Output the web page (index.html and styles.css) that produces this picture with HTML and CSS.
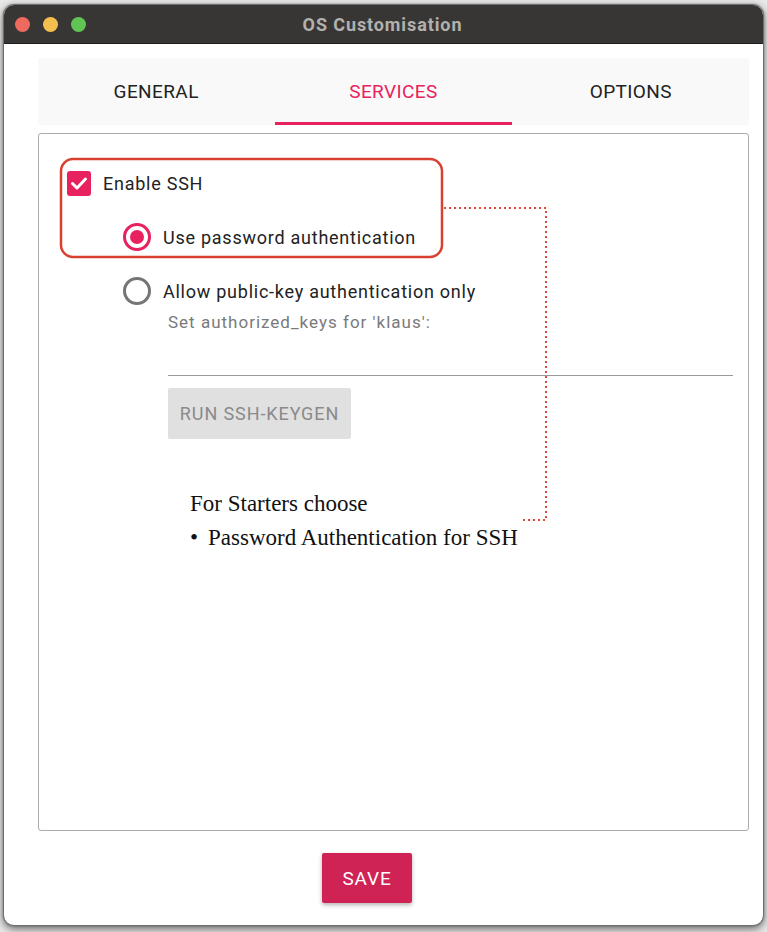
FILE: index.html
```html
<!DOCTYPE html>
<html>
<head>
<meta charset="utf-8">
<link rel="stylesheet" href="styles.css">
</head>
<body>
<div class="window">
  <div class="titlebar">
    <div class="lights">
      <span class="light red"></span>
      <span class="light yellow"></span>
      <span class="light green"></span>
    </div>
    <div class="title">OS Customisation</div>
  </div>
  <div class="content">
    <div class="tabs">
      <div class="tab">GENERAL</div>
      <div class="tab active">SERVICES</div>
      <div class="tab">OPTIONS</div>
    </div>
    <div class="panel">
      <div class="row">
        <span class="checkbox">
          <svg viewBox="0 0 24 24" width="24" height="24"><path d="M5.5 12.5 L10 17 L18.5 8" fill="none" stroke="#fff" stroke-width="3" stroke-linecap="round" stroke-linejoin="round"/></svg>
        </span>
        <span class="label">Enable SSH</span>
      </div>
      <div class="row sub">
        <span class="radio checked"></span>
        <span class="label">Use password authentication</span>
      </div>
      <div class="row sub">
        <span class="radio"></span>
        <span class="label">Allow public-key authentication only</span>
      </div>
      <div class="keys">
        <div class="hint">Set authorized_keys for 'klaus':</div>
        <div class="input"></div>
        <button class="keygen">RUN SSH-KEYGEN</button>
      </div>
      <div class="note">
        <div>For Starters choose</div>
        <div><span class="bullet">•</span>Password Authentication for SSH</div>
      </div>
    </div>
    <div class="actions">
      <button class="save">SAVE</button>
    </div>
  </div>
</div>
<svg class="annot" width="767" height="932" viewBox="0 0 767 932">
  <rect x="61" y="159" width="381" height="98" rx="12" ry="12" fill="none" stroke="#d8412f" stroke-width="2.5"/>
  <path d="M444 208 H546 V520 H522" fill="none" stroke="#e2473b" stroke-width="2" stroke-dasharray="2 3"/>
</svg>
</body>
</html>
```

FILE: styles.css
```css
* { box-sizing: border-box; }
html, body { margin: 0; padding: 0; }
body {
  width: 767px;
  height: 932px;
  background: #e9e9e9;
  padding: 4px 3px 0 3px;
  position: relative;
  overflow: hidden;
  font-family: Roboto, "Liberation Sans", sans-serif;
}
.window {
  width: 761px;
  height: 922px;
  border: 1px solid #6e6e6e;
  border-radius: 11px;
  overflow: hidden;
  background: #fff;
  box-shadow: 0 3px 8px rgba(0,0,0,0.55), 0 0 2px rgba(0,0,0,0.3);
}
.titlebar {
  height: 39px;
  background: #383634;
  position: relative;
  display: flex;
  align-items: center;
  justify-content: center;
  border-bottom: 1px solid #1e1d1c;
}
.lights {
  position: absolute;
  left: 11px;
  top: 12px;
  display: flex;
  gap: 13px;
}
.light {
  width: 15px;
  height: 15px;
  border-radius: 50%;
  display: block;
}
.red { background: #ee6a5f; }
.yellow { background: #f5bf4f; }
.green { background: #61c554; }
.title {
  color: #b3b1af;
  font-weight: 700;
  font-size: 18px;
  letter-spacing: 0.9px;
  margin-left: -2px;
}
.content {
  padding: 14px 14px 0 34px;
}
.tabs {
  display: flex;
  height: 67px;
  background: #f9f9f9;
}
.tab {
  flex: 1;
  display: flex;
  align-items: center;
  justify-content: center;
  font-size: 19px;
  color: #222;
  letter-spacing: 0.4px;
  border-bottom: 3px solid transparent;
  padding-top: 3px;
}
.tab.active {
  color: #e8215f;
  border-bottom-color: #e8215f;
  margin: 0 1px;
}
.panel {
  margin-top: 8px;
  height: 698px;
  border: 1px solid #ababab;
  border-radius: 3px;
  padding: 35px 15px 0 28px;
}
.row {
  height: 28px;
  display: flex;
  align-items: center;
  margin-bottom: 26px;
}
.row.sub {
  padding-left: 56px;
}
.row:nth-child(3) { margin-bottom: 7px; }
.checkbox {
  width: 24px;
  height: 25px;
  background: #e8215f;
  border-radius: 3px;
  display: flex;
  align-items: center;
  justify-content: center;
  margin-right: 12px;
}
.label {
  font-size: 18px;
  color: #222;
  letter-spacing: 0.75px;
}
.radio {
  width: 28px;
  height: 28px;
  border-radius: 50%;
  border: 3px solid #757575;
  margin-right: 12px;
  position: relative;
  flex: none;
}
.radio.checked {
  border-color: #e8215f;
}
.radio.checked::after {
  content: "";
  position: absolute;
  left: 4px;
  top: 4px;
  width: 14px;
  height: 14px;
  border-radius: 50%;
  background: #e8215f;
}
.keys {
  padding-left: 101px;
}
.hint {
  font-size: 17px;
  line-height: 20px;
  color: #7a7a7a;
  letter-spacing: 1px;
}
.input {
  height: 44px;
  border-bottom: 1px solid #9a9a9a;
}
.keygen {
  margin-top: 12px;
  width: 183px;
  height: 51px;
  border: none;
  border-radius: 2px;
  background: #e0e0e0;
  color: #8a8a8a;
  font-family: Roboto, "Liberation Sans", sans-serif;
  font-size: 18px;
  letter-spacing: 0.9px;
  padding: 0;
}
.note {
  margin-top: 48px;
  padding-left: 123px;
  font-family: "Liberation Serif", "Times New Roman", serif;
  font-size: 23px;
  line-height: 34px;
  color: #111;
}
.bullet {
  display: inline-block;
  width: 18px;
}
.actions {
  padding-top: 22px;
  padding-left: 284px;
}
.save {
  width: 90px;
  height: 50px;
  border: none;
  border-radius: 2px;
  background: #cf2255;
  color: #fff;
  font-family: Roboto, "Liberation Sans", sans-serif;
  font-size: 19px;
  letter-spacing: 0.8px;
  padding: 0;
  box-shadow: 0 2px 4px rgba(0,0,0,0.3);
}
.annot {
  position: absolute;
  left: 0;
  top: 0;
  pointer-events: none;
}
```
